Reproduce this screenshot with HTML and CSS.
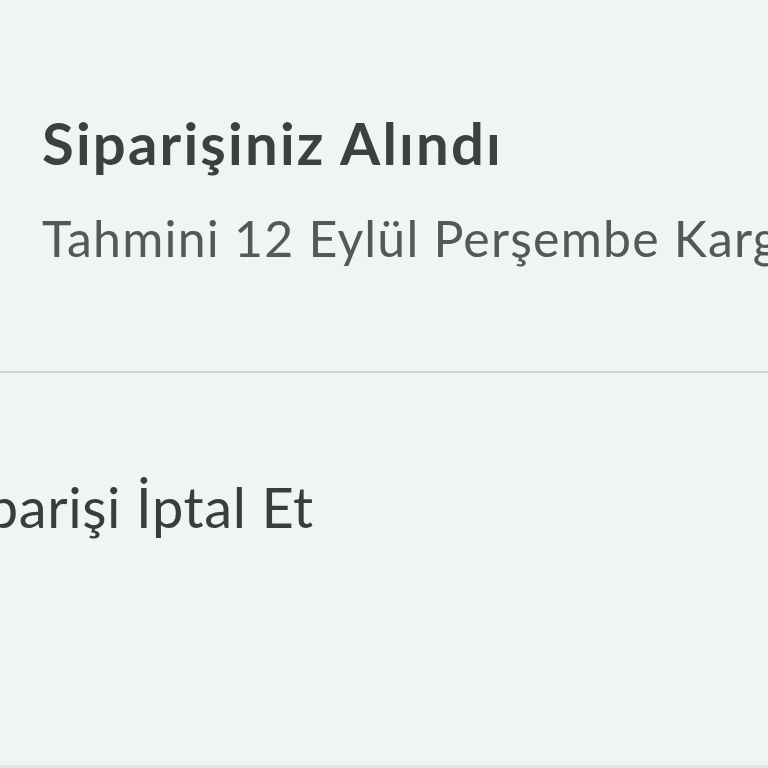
FILE: index.html
```html
<!DOCTYPE html>
<html lang="tr">
<head>
<meta charset="UTF-8" />
<meta name="viewport" content="width=device-width, initial-scale=1.0" />
<title>Sipariş Durumu</title>
<link rel="stylesheet" href="styles.css">
</head>
<body>
<div class="order-panel">
  <!-- Order status -->
  <div class="status">
    <h2 class="status-title">Siparişiniz Alındı</h2>
    <p class="status-note">Tahmini 12 Eylül Perşembe Kargoda</p>
  </div>

  <!-- Actions -->
  <div class="actions">
    <button class="action-btn">Siparişi İptal Et</button>
  </div>
</div>
</body>
</html>
```

FILE: styles.css
```css
* {
  box-sizing: border-box;
  margin: 0;
  padding: 0;
}
body {
  background-color: #f0f5f2;
  font-family: 'Lato', 'Noto Sans', sans-serif;
  overflow: hidden;
}
.order-panel {
  height: 768px;
  display: flex;
  flex-direction: column;
  border-bottom: 3px solid #e1e6e2;
}
.status {
  padding: 108px 0 0 42px;
  height: 373px;
  border-bottom: 2px solid #cdd3cf;
  white-space: nowrap;
  overflow: hidden;
}
.status-title {
  font-size: 58px;
  font-weight: 700;
  line-height: 70px;
  letter-spacing: 2.2px;
  color: #3d3f40;
}
.status-note {
  font-size: 50px;
  font-weight: 400;
  line-height: 70px;
  margin-top: 25px;
  letter-spacing: 1.2px;
  color: #555758;
}
.actions {
  flex: 1;
  padding-top: 100px;
  overflow: hidden;
}
.action-btn {
  background: none;
  border: none;
  font-family: inherit;
  font-size: 56px;
  letter-spacing: 0.6px;
  color: #3a3c3d;
  margin-left: -58px;
  white-space: nowrap;
  cursor: pointer;
}
```
